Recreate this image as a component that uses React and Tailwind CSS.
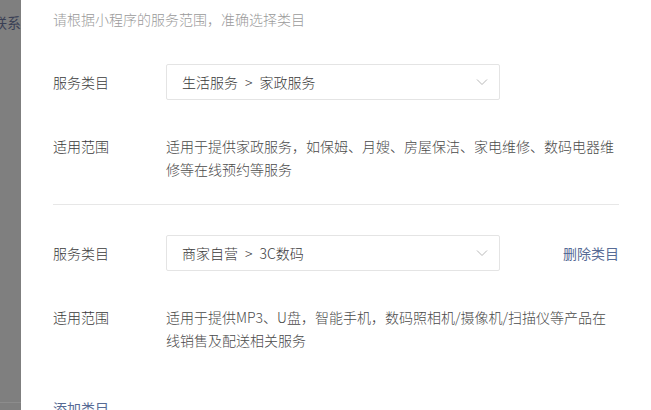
import React from "react";

const font = { fontFamily: '"Noto Sans CJK SC", "Noto Sans", sans-serif' };

function Chevron() {
  return (
    <svg width="12" height="8" viewBox="0 0 12 8" fill="none">
      <path d="M1 1.5 L6 6.5 L11 1.5" stroke="#b8b8b8" strokeWidth="1" />
    </svg>
  );
}

function Select({ a, b }) {
  return (
    <div className="w-[334px] h-[36px] border border-[#e4e4e4] rounded-[2px] bg-white flex items-center justify-between pl-[15px] pr-[11px]">
      <span className="text-[14px] text-[#3a3a3a] font-light">
        {a}
        <span className="mx-[7px]">&gt;</span>
        {b}
      </span>
      <Chevron />
    </div>
  );
}

function DescRow({ lines }) {
  return (
    <div className="flex">
      <div className="w-[113px] text-[14px] leading-[23px] text-[#3a3a3a] font-light">适用范围</div>
      <div className="text-[14px] leading-[23px] text-[#4a4a4a] font-light">
        {lines.map((l, i) => (
          <div key={i} className="whitespace-nowrap">{l}</div>
        ))}
      </div>
    </div>
  );
}

export default function App() {
  return (
    <div className="flex w-[651px] h-[410px] overflow-hidden bg-white" style={font}>
      <div className="w-[21px] h-full bg-[#7f7f7f] overflow-hidden relative shrink-0">
        <div className="pt-[12px] ml-[-7px] text-[14px] leading-[20px] whitespace-nowrap text-[#3a3f55]">联系我们</div>
        <div className="absolute left-0 top-[402px] w-full h-px bg-[#8c8c8c]" />
      </div>
      <div className="flex-1 px-[32px] pt-[9px]">
        <div className="text-[14px] leading-[20px] text-[#9a9a9a] font-light">请根据小程序的服务范围，准确选择类目</div>

        <div className="flex items-center mt-[35px]">
          <div className="w-[113px] text-[14px] text-[#3a3a3a] font-light">服务类目</div>
          <Select a="生活服务" b="家政服务" />
        </div>

        <div className="mt-[35px]">
          <DescRow lines={["适用于提供家政服务，如保姆、月嫂、房屋保洁、家电维修、数码电器维", "修等在线预约等服务"]} />
        </div>

        <div className="mt-[23px] h-px bg-[#e7e7e7]" />

        <div className="flex items-center mt-[30px]">
          <div className="w-[113px] text-[14px] text-[#3a3a3a] font-light">服务类目</div>
          <Select a="商家自营" b="3C数码" />
          <div className="ml-auto text-[14px] text-[#576b95]">删除类目</div>
        </div>

        <div className="mt-[35px]">
          <DescRow lines={["适用于提供MP3、U盘，智能手机，数码照相机/摄像机/扫描仪等产品在", "线销售及配送相关服务"]} />
        </div>

        <div className="mt-[44px] text-[14px] leading-[24px] text-[#576b95]">添加类目</div>
      </div>
    </div>
  );
}
